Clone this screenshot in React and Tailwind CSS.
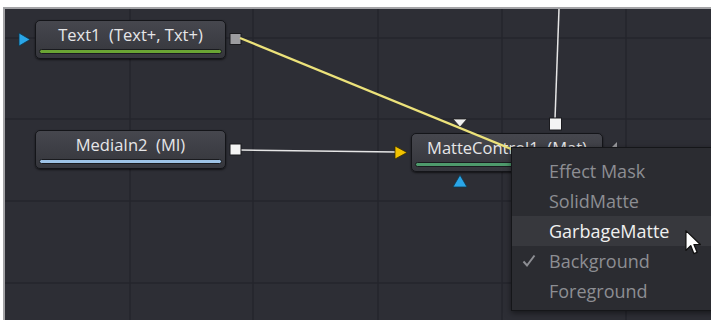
import React from 'react';

const font = { fontFamily: '"Open Sans", "Lato", sans-serif' };

function Node({ left, top, width, label, barClass, textTop }) {
  return (
    <div
      className="absolute h-[39px] rounded-[5px] border border-[#141519] bg-gradient-to-b from-[#46474e] to-[#35363c] shadow-[0_1px_2px_rgba(0,0,0,0.6)]"
      style={{ left, top, width }}
    >
      <div
        className="absolute left-0 right-0 text-center text-[16.5px] font-medium leading-[19px] text-[#e6e6e8] whitespace-pre"
        style={{ top: textTop }}
      >
        {label}
      </div>
      <div className={`absolute left-[3px] right-[3px] top-[28px] h-[5px] rounded-full border border-[#1a1b1f] ${barClass}`} />
    </div>
  );
}

const items = ['Effect Mask', 'SolidMatte', 'GarbageMatte', 'Background', 'Foreground'];

export default function App() {
  return (
    <div className="relative w-[711px] h-[320px] overflow-hidden bg-white pt-[7px] pl-[3px]" style={font}>
      {/* canvas */}
      <div className="w-full h-full border-t-2 border-l-2 border-[#a3a3a6] bg-[#2d2e35]" />

      {/* grid + white wires */}
      <svg className="absolute inset-0" width="711" height="320">
        <g stroke="#25262c" strokeWidth="1.5">
          <line x1="130" y1="9" x2="130" y2="320" />
          <line x1="253" y1="9" x2="253" y2="320" />
          <line x1="378" y1="9" x2="378" y2="320" />
          <line x1="502" y1="9" x2="502" y2="320" />
          <line x1="626" y1="9" x2="626" y2="320" />
          <line x1="5" y1="38" x2="711" y2="38" />
          <line x1="5" y1="119" x2="711" y2="119" />
          <line x1="5" y1="201" x2="711" y2="201" />
          <line x1="5" y1="283" x2="711" y2="283" />
        </g>
        <line x1="240" y1="150" x2="396" y2="152" stroke="#e6e6e6" strokeWidth="1.5" />
        <line x1="559" y1="9" x2="555" y2="119" stroke="#e6e6e6" strokeWidth="1.5" />
        {/* Text1 input */}
        <polygon points="19,33 30,39.5 19,46" fill="#2aa6e8" stroke="#0d3a52" strokeWidth="0.8" />
        {/* Text1 output */}
        <rect x="230" y="33.5" width="11" height="11" fill="#9c9ca0" stroke="#1a1a1e" strokeWidth="1" />
        {/* MediaIn output */}
        <rect x="230" y="144" width="11" height="11" fill="#f4f4f4" stroke="#1a1a1e" strokeWidth="1" />
        {/* MatteControl ports */}
        <polygon points="395,146 407,152.5 395,159" fill="#f2c200" stroke="#3a3000" strokeWidth="0.8" />
        <polygon points="453,119 467,119 460,127" fill="#f0f0f0" stroke="#222" strokeWidth="0.8" />
        <polygon points="460,175 467,187 453,187" fill="#2aa6e8" stroke="#0d3a52" strokeWidth="0.8" />
        <rect x="549.5" y="118" width="12" height="12" fill="#f4f4f4" stroke="#1a1a1e" strokeWidth="1" />
        <polygon points="612,147 617,142 617,147" fill="#9a9a9e" />
      </svg>

      <Node left={35} top={20} width={191} label="Text1  (Text+, Txt+)" barClass="bg-[#6aa534]" textTop={4} />
      <Node left={35} top={130} width={191} label="MediaIn2  (MI)" barClass="bg-[#9ec3e6]" textTop={4} />
      <Node left={411} top={133} width={192} label="MatteControl1  (Mat)" barClass="bg-[#4e9a6c]" textTop={4} />

      {/* yellow wire over nodes */}
      <svg className="absolute inset-0 pointer-events-none" width="711" height="320">
        <line x1="240" y1="38" x2="560" y2="169" stroke="#ece27a" strokeWidth="2.2" />
      </svg>

      {/* context menu */}
      <div className="absolute left-[511px] top-[147px] w-[230px] h-[164px] border border-[#151619] bg-[#2b2c31] pt-[8px] shadow-[0_2px_6px_rgba(0,0,0,0.5)]">
        {items.map((it) => (
          <div
            key={it}
            className={`relative h-[30px] flex items-center pl-[37px] text-[18px] ${
              it === 'GarbageMatte' ? 'bg-[#37383d] text-[#f0f0f0]' : 'text-[#8d8e93]'
            }`}
          >
            {it === 'Background' && (
              <svg className="absolute left-[10px] top-[8px]" width="14" height="14" viewBox="0 0 14 14">
                <polyline points="1.5,7.5 5,11.5 12.5,1.5" fill="none" stroke="#8d8e93" strokeWidth="2" />
              </svg>
            )}
            {it}
          </div>
        ))}
      </div>

      {/* cursor */}
      <svg className="absolute left-[684px] top-[229px]" width="22" height="30" viewBox="0 0 20 28">
        <path d="M1.5 1.5 L1.5 20 L6 15.5 L9 23 L12 21.8 L9 14.5 L15 14.5 Z" fill="#ffffff" stroke="#111" strokeWidth="1.2" strokeLinejoin="round" />
      </svg>
    </div>
  );
}
